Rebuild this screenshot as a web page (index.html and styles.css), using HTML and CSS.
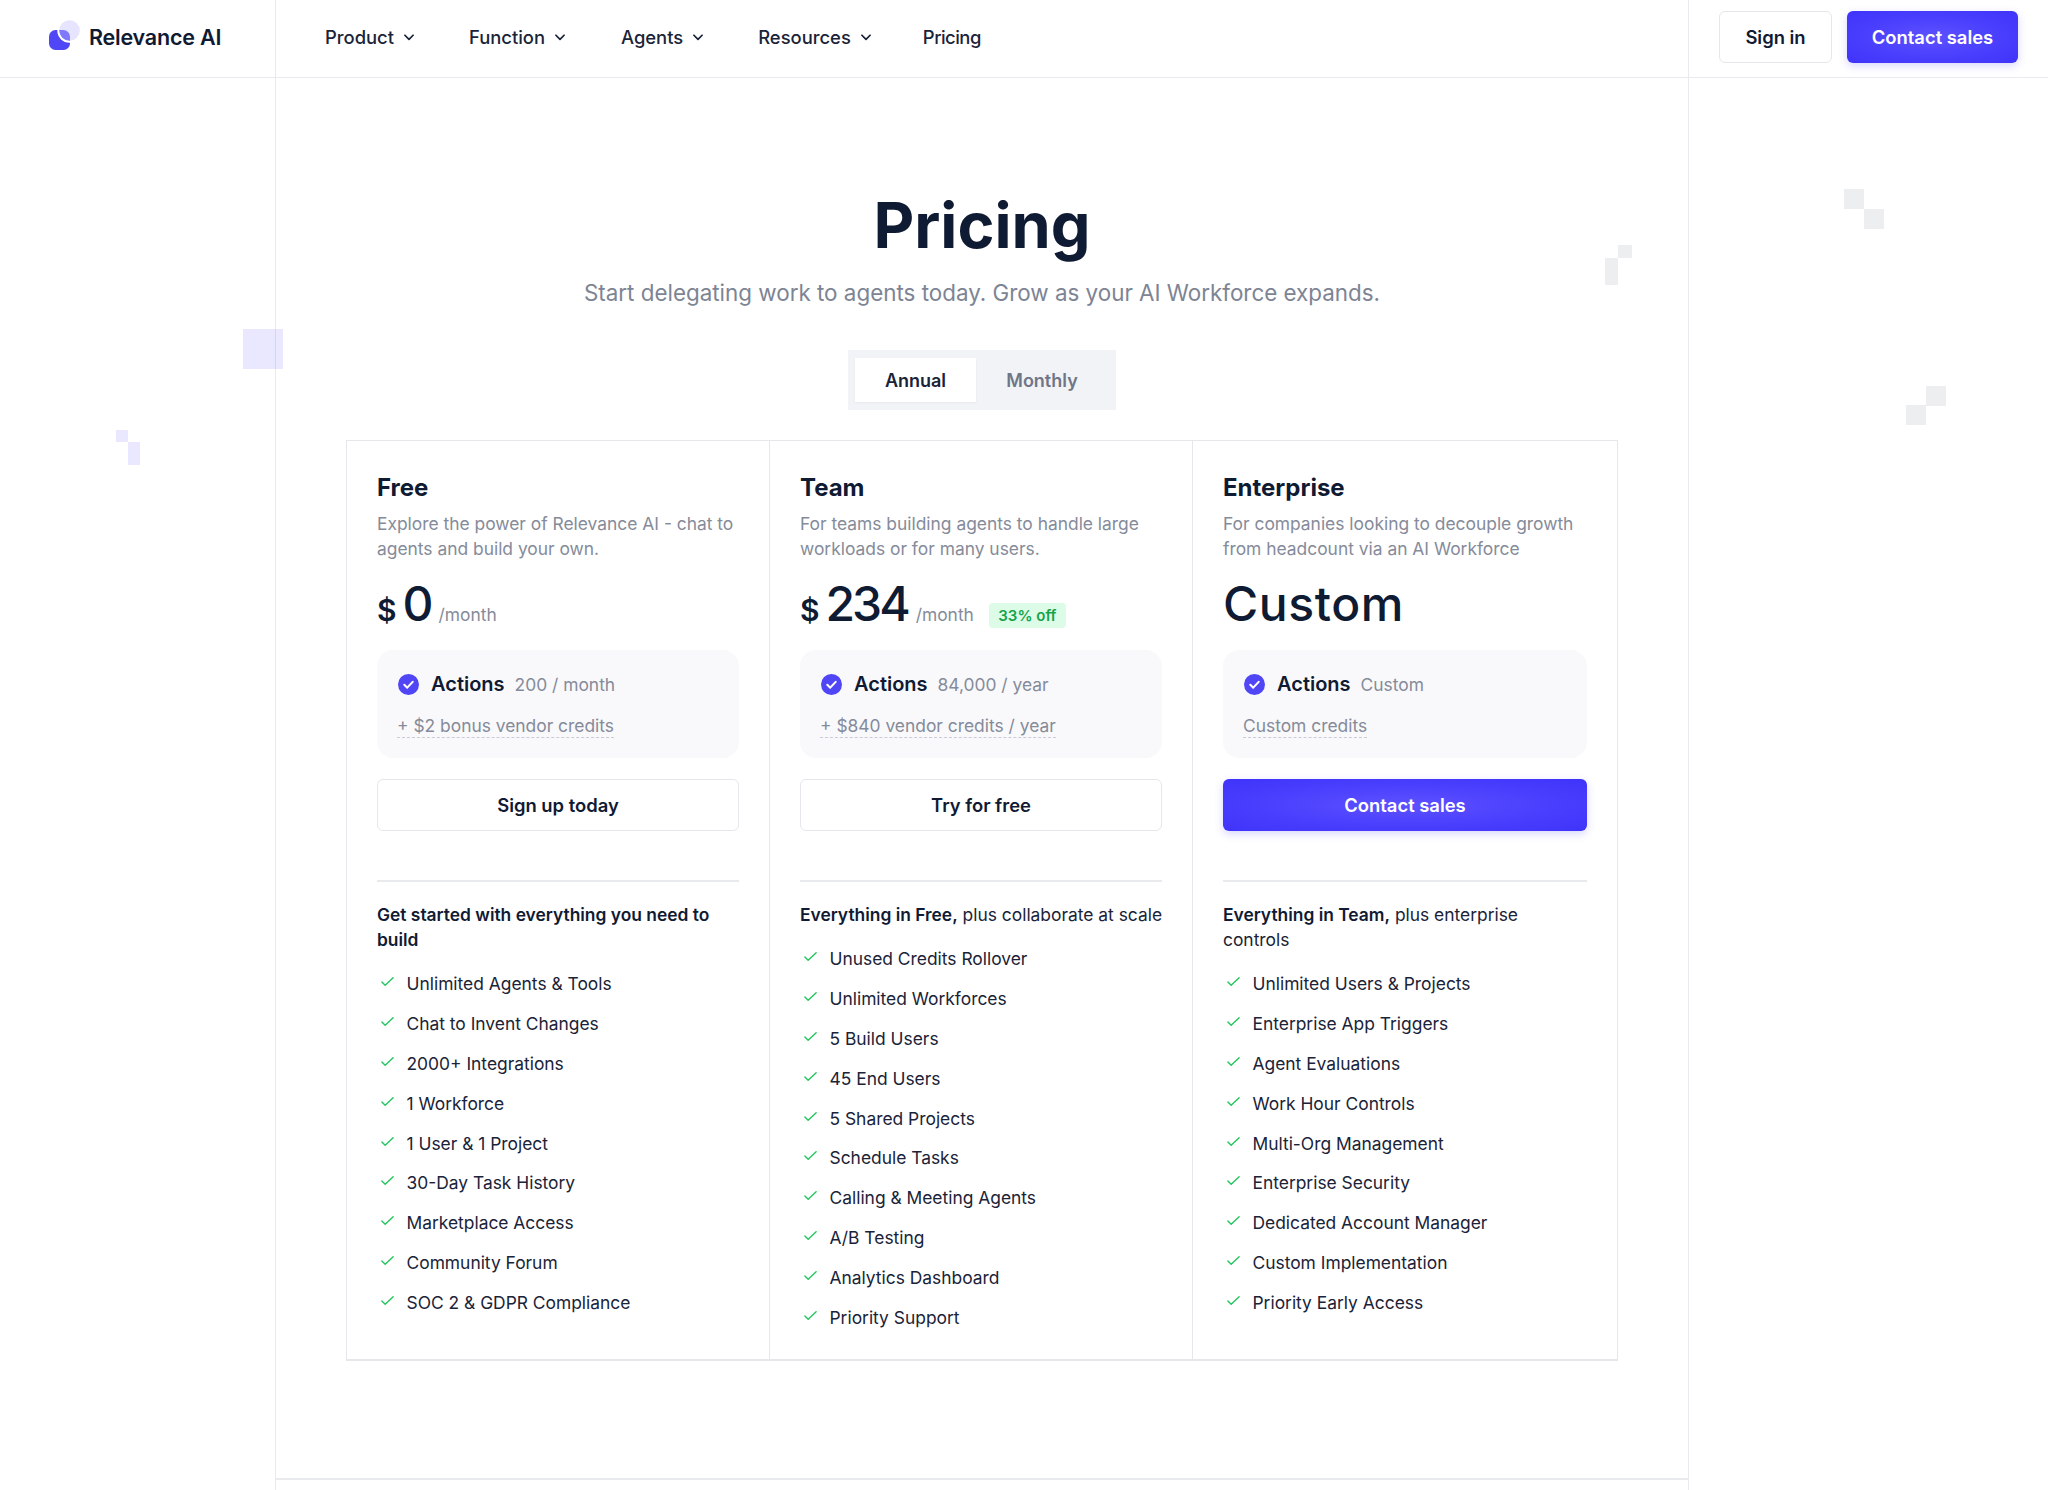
FILE: index.html
```html
<!DOCTYPE html>
<html lang="en">
<head>
<meta charset="utf-8">
<title>Pricing - Relevance AI</title>
<link rel="stylesheet" href="styles.css">
</head>
<body>
<header class="topbar">
  <div class="brand">
    <svg class="logo" width="32" height="32" viewBox="0 0 32 32" aria-hidden="true">
      <defs>
        <clipPath id="blob"><rect x="0" y="9" width="21" height="20" rx="6.500"/></clipPath>
      </defs>
      <rect x="0" y="9" width="21" height="20" rx="6.500" fill="#4f46f5"/>
      <circle cx="20.500" cy="9.500" r="10.300" fill="#e6e4fe"/>
      <g clip-path="url(#blob)">
        <circle cx="20.500" cy="9.500" r="12.200" fill="#fff"/>
        <circle cx="20.500" cy="9.500" r="10.300" fill="#7f79f9"/>
      </g>
    </svg>
    <span class="brand-name">Relevance AI</span>
  </div>
  <nav class="nav">
    <a class="nav-item nav-product">Product <svg class="chev" viewBox="0 0 12 12"><path d="M2.500 4.500 6 8l3.500-3.500"/></svg></a>
    <a class="nav-item nav-function">Function <svg class="chev" viewBox="0 0 12 12"><path d="M2.500 4.500 6 8l3.500-3.500"/></svg></a>
    <a class="nav-item nav-agents">Agents <svg class="chev" viewBox="0 0 12 12"><path d="M2.500 4.500 6 8l3.500-3.500"/></svg></a>
    <a class="nav-item nav-resources">Resources <svg class="chev" viewBox="0 0 12 12"><path d="M2.500 4.500 6 8l3.500-3.500"/></svg></a>
    <a class="nav-item nav-pricing">Pricing</a>
  </nav>
  <div class="actions">
    <a class="btn btn-outline btn-signin">Sign in</a>
    <a class="btn btn-primary btn-contact">Contact sales</a>
  </div>
</header>

<div class="shell">
  <main class="center">
    <div class="hero">
      <h1 class="title">Pricing</h1>
      <p class="subtitle">Start delegating work to agents today. Grow as your AI Workforce expands.</p>
      <div class="toggle">
        <span class="tab tab-active">Annual</span>
        <span class="tab tab-idle">Monthly</span>
      </div>
    </div>

    <section class="plans">
      <article class="plan">
        <h2 class="plan-name">Free</h2>
        <p class="plan-desc">Explore the power of Relevance AI - chat to agents and build your own.</p>
        <div class="price"><span class="currency">$</span><span class="amount">0</span><span class="period">/month</span></div>
        <div class="quota">
          <div class="quota-row">
            <svg class="quota-check" viewBox="0 0 20 20"><circle cx="10" cy="10" r="10"/><path d="m6 10.300 2.800 2.700L14 7.500"/></svg>
            <b class="quota-label">Actions</b><span class="quota-value">200 / month</span>
          </div>
          <div class="quota-credits"><span class="dashed">+ $2 bonus vendor credits</span></div>
        </div>
        <a class="btn btn-outline btn-plan">Sign up today</a>
        <hr class="rule">
        <p class="lead"><b>Get started with everything you need to build</b></p>
        <ul class="features">
          <li><svg class="tick" viewBox="0 0 16 16"><path d="m2 8.500 3.500 3.500L14 4"/></svg>Unlimited Agents &amp; Tools</li>
          <li><svg class="tick" viewBox="0 0 16 16"><path d="m2 8.500 3.500 3.500L14 4"/></svg>Chat to Invent Changes</li>
          <li><svg class="tick" viewBox="0 0 16 16"><path d="m2 8.500 3.500 3.500L14 4"/></svg>2000+ Integrations</li>
          <li><svg class="tick" viewBox="0 0 16 16"><path d="m2 8.500 3.500 3.500L14 4"/></svg>1 Workforce</li>
          <li><svg class="tick" viewBox="0 0 16 16"><path d="m2 8.500 3.500 3.500L14 4"/></svg>1 User &amp; 1 Project</li>
          <li><svg class="tick" viewBox="0 0 16 16"><path d="m2 8.500 3.500 3.500L14 4"/></svg>30-Day Task History</li>
          <li><svg class="tick" viewBox="0 0 16 16"><path d="m2 8.500 3.500 3.500L14 4"/></svg>Marketplace Access</li>
          <li><svg class="tick" viewBox="0 0 16 16"><path d="m2 8.500 3.500 3.500L14 4"/></svg>Community Forum</li>
          <li><svg class="tick" viewBox="0 0 16 16"><path d="m2 8.500 3.500 3.500L14 4"/></svg>SOC 2 &amp; GDPR Compliance</li>
        </ul>
      </article>

      <article class="plan">
        <h2 class="plan-name">Team</h2>
        <p class="plan-desc">For teams building agents to handle large workloads or for many users.</p>
        <div class="price"><span class="currency">$</span><span class="amount">234</span><span class="period">/month</span><span class="badge">33% off</span></div>
        <div class="quota">
          <div class="quota-row">
            <svg class="quota-check" viewBox="0 0 20 20"><circle cx="10" cy="10" r="10"/><path d="m6 10.300 2.800 2.700L14 7.500"/></svg>
            <b class="quota-label">Actions</b><span class="quota-value">84,000 / year</span>
          </div>
          <div class="quota-credits"><span class="dashed">+ $840 vendor credits / year</span></div>
        </div>
        <a class="btn btn-outline btn-plan">Try for free</a>
        <hr class="rule">
        <p class="lead lead-single"><b>Everything in Free,</b> plus collaborate at scale</p>
        <ul class="features">
          <li><svg class="tick" viewBox="0 0 16 16"><path d="m2 8.500 3.500 3.500L14 4"/></svg>Unused Credits Rollover</li>
          <li><svg class="tick" viewBox="0 0 16 16"><path d="m2 8.500 3.500 3.500L14 4"/></svg>Unlimited Workforces</li>
          <li><svg class="tick" viewBox="0 0 16 16"><path d="m2 8.500 3.500 3.500L14 4"/></svg>5 Build Users</li>
          <li><svg class="tick" viewBox="0 0 16 16"><path d="m2 8.500 3.500 3.500L14 4"/></svg>45 End Users</li>
          <li><svg class="tick" viewBox="0 0 16 16"><path d="m2 8.500 3.500 3.500L14 4"/></svg>5 Shared Projects</li>
          <li><svg class="tick" viewBox="0 0 16 16"><path d="m2 8.500 3.500 3.500L14 4"/></svg>Schedule Tasks</li>
          <li><svg class="tick" viewBox="0 0 16 16"><path d="m2 8.500 3.500 3.500L14 4"/></svg>Calling &amp; Meeting Agents</li>
          <li><svg class="tick" viewBox="0 0 16 16"><path d="m2 8.500 3.500 3.500L14 4"/></svg>A/B Testing</li>
          <li><svg class="tick" viewBox="0 0 16 16"><path d="m2 8.500 3.500 3.500L14 4"/></svg>Analytics Dashboard</li>
          <li><svg class="tick" viewBox="0 0 16 16"><path d="m2 8.500 3.500 3.500L14 4"/></svg>Priority Support</li>
        </ul>
      </article>

      <article class="plan">
        <h2 class="plan-name">Enterprise</h2>
        <p class="plan-desc">For companies looking to decouple growth from headcount via an AI Workforce</p>
        <div class="price"><span class="custom">Custom</span></div>
        <div class="quota">
          <div class="quota-row">
            <svg class="quota-check" viewBox="0 0 20 20"><circle cx="10" cy="10" r="10"/><path d="m6 10.300 2.800 2.700L14 7.500"/></svg>
            <b class="quota-label">Actions</b><span class="quota-value">Custom</span>
          </div>
          <div class="quota-credits"><span class="dashed">Custom credits</span></div>
        </div>
        <a class="btn btn-primary btn-plan">Contact sales</a>
        <hr class="rule">
        <p class="lead"><b>Everything in Team,</b> plus enterprise<br>controls</p>
        <ul class="features">
          <li><svg class="tick" viewBox="0 0 16 16"><path d="m2 8.500 3.500 3.500L14 4"/></svg>Unlimited Users &amp; Projects</li>
          <li><svg class="tick" viewBox="0 0 16 16"><path d="m2 8.500 3.500 3.500L14 4"/></svg>Enterprise App Triggers</li>
          <li><svg class="tick" viewBox="0 0 16 16"><path d="m2 8.500 3.500 3.500L14 4"/></svg>Agent Evaluations</li>
          <li><svg class="tick" viewBox="0 0 16 16"><path d="m2 8.500 3.500 3.500L14 4"/></svg>Work Hour Controls</li>
          <li><svg class="tick" viewBox="0 0 16 16"><path d="m2 8.500 3.500 3.500L14 4"/></svg>Multi-Org Management</li>
          <li><svg class="tick" viewBox="0 0 16 16"><path d="m2 8.500 3.500 3.500L14 4"/></svg>Enterprise Security</li>
          <li><svg class="tick" viewBox="0 0 16 16"><path d="m2 8.500 3.500 3.500L14 4"/></svg>Dedicated Account Manager</li>
          <li><svg class="tick" viewBox="0 0 16 16"><path d="m2 8.500 3.500 3.500L14 4"/></svg>Custom Implementation</li>
          <li><svg class="tick" viewBox="0 0 16 16"><path d="m2 8.500 3.500 3.500L14 4"/></svg>Priority Early Access</li>
        </ul>
      </article>
    </section>
    <div class="page-rule"></div>
  </main>
</div>

<div class="deco deco-p1"></div>
<div class="deco deco-p2"></div>
<div class="deco deco-p3"></div>
<div class="deco deco-g1"></div>
<div class="deco deco-g2"></div>
<div class="deco deco-g3"></div>
<div class="deco deco-g4"></div>
<div class="deco deco-g5"></div>
<div class="deco deco-g6"></div>
<div class="deco deco-g7"></div>
</body>
</html>
```

FILE: styles.css
```css
* { box-sizing: border-box; }

html, body {
  margin: 0;
  height: 1490px;
  overflow: hidden;
  background: #fff;
  color: #101a33;
  font-family: Inter, "Liberation Sans", sans-serif;
}

body { position: relative; }

/* Header */
.topbar {
  display: flex;
  align-items: stretch;
  height: 78px;
  border-bottom: 1px solid #e9eaed;
}

.brand {
  display: flex;
  align-items: center;
  width: 276px;
  padding: 0 0 3px 49px;
  border-right: 1px solid #e9eaed;
}

.logo {
  flex: none;
  overflow: visible;
  margin-right: 8px;
}

.brand-name {
  font-size: 21.500px;
  font-weight: 600;
  letter-spacing: -0.2px;
  color: #101a33;
}

.nav {
  display: flex;
  flex: 1;
  align-items: center;
  padding: 0 0 3px 49px;
  font-size: 18.400px;
  font-weight: 500;
}

.nav-item {
  display: flex;
  align-items: center;
  gap: 8px;
  color: #1a2338;
}

.nav-product { margin-right: 53px; }
.nav-function { margin-right: 54px; }
.nav-agents { margin-right: 53px; }
.nav-resources { margin-right: 50px; }
.nav-pricing { letter-spacing: -0.5px; }

.chev {
  width: 14px;
  height: 14px;
  fill: none;
  stroke: #1a2338;
  stroke-width: 1.500;
  stroke-linecap: round;
  stroke-linejoin: round;
}

.actions {
  display: flex;
  align-items: center;
  gap: 15px;
  width: 360px;
  padding: 0 0 3px 30px;
  border-left: 1px solid #e9eaed;
}

/* Buttons */
.btn {
  display: flex;
  align-items: center;
  justify-content: center;
  height: 52px;
  border-radius: 6px;
  font-size: 18.400px;
  font-weight: 600;
}

.btn-outline {
  background: #fff;
  border: 1px solid #e6e7ec;
  color: #101a33;
}

.btn-primary {
  background: radial-gradient(ellipse at 50% 50%, #5d52ff 0%, #4a3ffd 55%, #3f33fa 100%);
  color: #fff;
  box-shadow: 0 3px 8px rgba(79, 70, 245, 0.22);
}

.btn-signin { width: 113px; }
.btn-contact { width: 171px; }
.btn-plan { width: 100%; margin-top: 21px; }

/* Page columns */
.shell {
  display: flex;
  height: 1412px;
  padding-left: 275px;
}

.center {
  width: 1414px;
  height: 1412px;
  padding-top: 1px;
  border-left: 1px solid #e9eaed;
  border-right: 1px solid #e9eaed;
}

.page-rule {
  height: 2px;
  margin-top: 117px;
  background: #e9eaed;
}

/* Hero */
.hero {
  display: flex;
  flex-direction: column;
  align-items: center;
  padding-top: 110px;
}

.title {
  margin: 0;
  font-size: 63px;
  line-height: 72px;
  font-weight: 700;
  color: #0f1a33;
}

.subtitle {
  margin: 16px 0 0;
  font-size: 22.400px;
  line-height: 32px;
  color: #7d8494;
}

.toggle {
  display: flex;
  align-items: center;
  width: 268px;
  height: 60px;
  margin-top: 41px;
  padding: 0 7px;
  background: #f2f3f6;
}

.tab {
  display: flex;
  align-items: center;
  justify-content: center;
  height: 44px;
  font-size: 18px;
  font-weight: 600;
}

.tab-active {
  width: 121px;
  background: #fff;
  color: #1a2338;
  box-shadow: 0 1px 2px rgba(16, 26, 51, 0.06);
}

.tab-idle {
  width: 132px;
  color: #6f7687;
}

/* Plans */
.plans {
  display: grid;
  grid-template-columns: 423px 423px 1fr;
  width: 1272px;
  height: 921px;
  margin: 30px 0 0 70px;
  border: 1px solid #e6e7ea;
  border-bottom-width: 2px;
}

.plan {
  min-width: 0;
  padding: 31px 30px 0;
  border-right: 1px solid #e6e7ea;
}

.plan:last-child { border-right: 0; }

.plan-name {
  margin: 0;
  font-size: 24px;
  line-height: 32px;
  font-weight: 700;
  color: #0f1a33;
}

.plan-desc {
  margin: 7px 0 0;
  font-size: 17.400px;
  line-height: 25px;
  color: #858b9a;
}

.price {
  display: flex;
  align-items: baseline;
  height: 72px;
  padding-top: 13px;
  line-height: 60px;
}

.currency {
  font-size: 30px;
  font-weight: 600;
  color: #0f1a33;
  margin-right: 6px;
}

.amount {
  font-size: 48px;
  font-weight: 500;
  letter-spacing: -3px;
  color: #0f1a33;
}

.period {
  margin-left: 8px;
  font-size: 17.400px;
  color: #858b9a;
}

.badge {
  margin-left: 15px;
  width: 77px;
  height: 25px;
  line-height: 25px;
  text-align: center;
  border-radius: 4px;
  background: #dcfce7;
  color: #16a34a;
  font-size: 15px;
  font-weight: 600;
}

.custom {
  font-size: 48px;
  font-weight: 500;
  letter-spacing: 0.6px;
  color: #0f1a33;
}

.quota {
  height: 108px;
  margin-top: 17px;
  padding: 20px 20px 0;
  border-radius: 16px;
  background: #f9f9fb;
}

.quota-row {
  display: flex;
  align-items: center;
  height: 28px;
}

.quota-check {
  flex: none;
  width: 21px;
  height: 21px;
  margin-left: 1px;
  margin-right: 12px;
}

.quota-check circle { fill: #5046f5; }

.quota-check path {
  fill: none;
  stroke: #fff;
  stroke-width: 2;
  stroke-linecap: round;
  stroke-linejoin: round;
}

.quota-label {
  font-size: 20px;
  font-weight: 600;
  color: #101a33;
}

.quota-value {
  margin-left: 10px;
  font-size: 17.400px;
  color: #858b9a;
}

.quota-credits {
  margin-top: 16px;
  font-size: 17.400px;
  line-height: 24px;
  color: #858b9a;
}

.dashed {
  display: inline-block;
  line-height: 22px;
  border-bottom: 1px dashed #c9ccd4;
}

.rule {
  height: 2px;
  margin: 49px 0 0;
  border: 0;
  background: #e9eaed;
}

.lead {
  margin: 20px 0 0;
  font-size: 17.400px;
  line-height: 25px;
  color: #1a2338;
}

.lead-single { white-space: nowrap; }

.lead b {
  font-weight: 600;
  color: #101a33;
}

.features {
  margin: 12px 0 0;
  padding: 0;
  list-style: none;
}

.features li {
  display: flex;
  align-items: center;
  height: 39.800px;
  font-size: 17.400px;
  color: #1a2338;
}

.tick {
  flex: none;
  width: 15px;
  height: 15px;
  margin: -4px 11.500px 0 3px;
  fill: none;
  stroke: #22c55e;
  stroke-width: 1.500;
  stroke-linecap: round;
  stroke-linejoin: round;
}

/* Decorative pixels */
.deco { position: absolute; }
.deco-p1 { left: 243px; top: 329px; width: 40px; height: 40px; background: rgba(80, 70, 245, 0.125); }
.deco-p2 { left: 116px; top: 430px; width: 12px; height: 12px; background: rgba(80, 70, 245, 0.125); }
.deco-p3 { left: 128px; top: 442px; width: 12px; height: 23px; background: rgba(80, 70, 245, 0.125); }
.deco-g1 { left: 1844px; top: 189px; width: 20px; height: 20px; background: #edeef0; }
.deco-g2 { left: 1864px; top: 209px; width: 20px; height: 20px; background: #edeef0; }
.deco-g3 { left: 1618px; top: 245px; width: 14px; height: 13px; background: #edeef0; }
.deco-g4 { left: 1605px; top: 258px; width: 13px; height: 13px; background: #edeef0; }
.deco-g5 { left: 1605px; top: 271px; width: 13px; height: 14px; background: #edeef0; }
.deco-g6 { left: 1926px; top: 386px; width: 20px; height: 20px; background: #edeef0; }
.deco-g7 { left: 1906px; top: 405px; width: 20px; height: 20px; background: #edeef0; }
```
